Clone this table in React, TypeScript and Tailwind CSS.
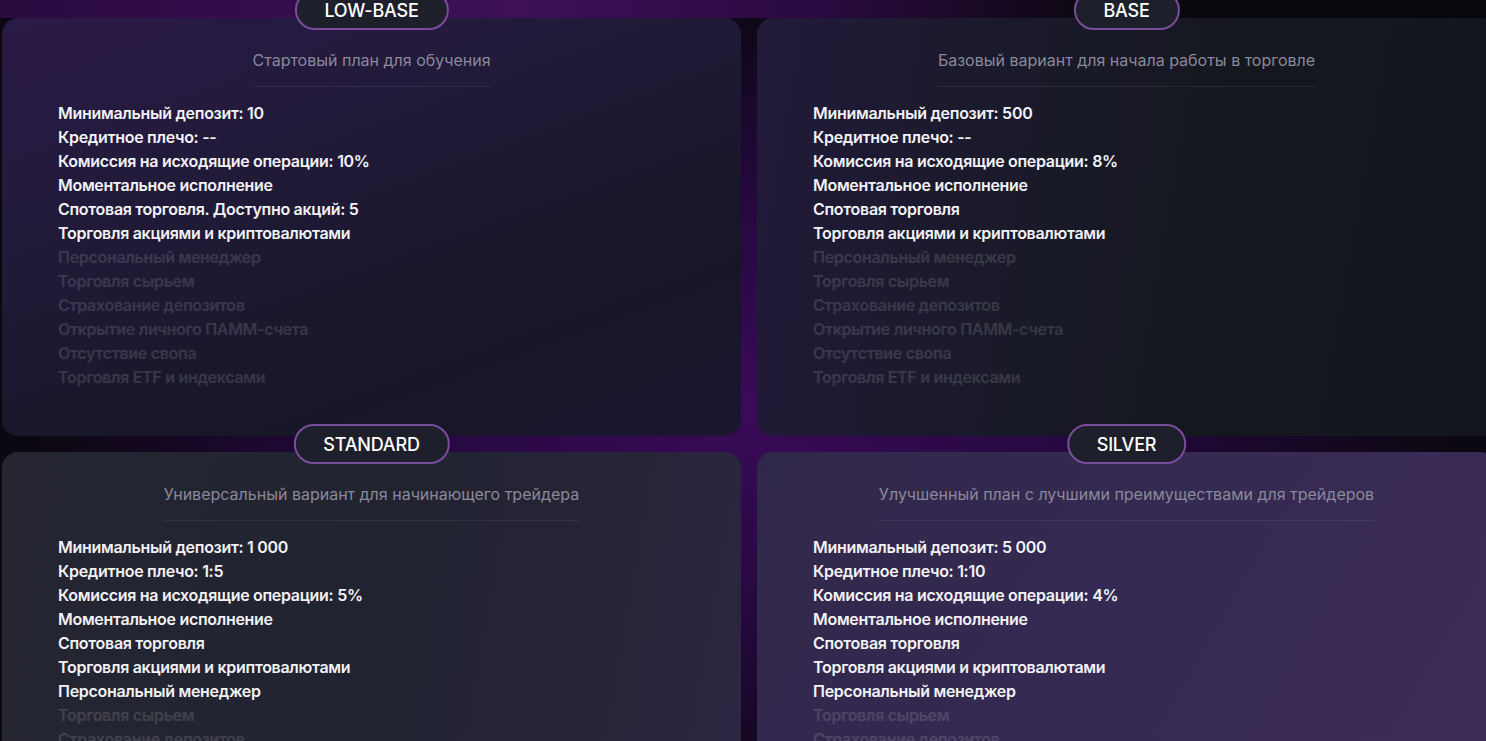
import React from 'react';

type Plan = {
  name: string;
  subtitle: string;
  features: string[];
  active: number;
  card: string;
};

const rest = [
  'Персональный менеджер',
  'Торговля сырьем',
  'Страхование депозитов',
  'Открытие личного ПАММ-счета',
  'Отсутствие свопа',
  'Торговля ETF и индексами',
];

const plans: Plan[] = [
  {
    name: 'LOW-BASE',
    subtitle: 'Стартовый план для обучения',
    features: [
      'Минимальный депозит: 10',
      'Кредитное плечо: --',
      'Комиссия на исходящие операции: 10%',
      'Моментальное исполнение',
      'Спотовая торговля. Доступно акций: 5',
      'Торговля акциями и криптовалютами',
      ...rest,
    ],
    active: 6,
    card: 'bg-[linear-gradient(160deg,#2a1a47_0%,#1f1a36_40%,#171626_75%,#1c1632_100%)]',
  },
  {
    name: 'BASE',
    subtitle: 'Базовый вариант для начала работы в торговле',
    features: [
      'Минимальный депозит: 500',
      'Кредитное плечо: --',
      'Комиссия на исходящие операции: 8%',
      'Моментальное исполнение',
      'Спотовая торговля',
      'Торговля акциями и криптовалютами',
      ...rest,
    ],
    active: 6,
    card: 'bg-[linear-gradient(100deg,#221a3a_0%,#1a1a2a_35%,#15171f_60%,#14161d_100%)]',
  },
  {
    name: 'STANDARD',
    subtitle: 'Универсальный вариант для начинающего трейдера',
    features: [
      'Минимальный депозит: 1 000',
      'Кредитное плечо: 1:5',
      'Комиссия на исходящие операции: 5%',
      'Моментальное исполнение',
      'Спотовая торговля',
      'Торговля акциями и криптовалютами',
      ...rest,
    ],
    active: 7,
    card: 'bg-[linear-gradient(100deg,#252632_0%,#212330_50%,#272438_80%,#2e2644_100%)]',
  },
  {
    name: 'SILVER',
    subtitle: 'Улучшенный план с лучшими преимуществами для трейдеров',
    features: [
      'Минимальный депозит: 5 000',
      'Кредитное плечо: 1:10',
      'Комиссия на исходящие операции: 4%',
      'Моментальное исполнение',
      'Спотовая торговля',
      'Торговля акциями и криптовалютами',
      ...rest,
    ],
    active: 7,
    card: 'bg-[linear-gradient(120deg,#30284a_0%,#352a52_45%,#3c2c58_100%)]',
  },
];

function PlanCard({ plan }: { plan: Plan }) {
  return (
    <div className={`relative rounded-[16px] pt-[30px] pb-[47px] ${plan.card}`}>
      <div className="absolute left-1/2 top-[-28px] -translate-x-1/2 h-[40px] px-[28px] flex items-center rounded-full border-2 border-[#7b4c9c] bg-[#1d1f2b] text-white text-[18px] font-medium tracking-[-0.2px]">
        {plan.name}
      </div>
      <div className="flex justify-center">
        <div className="pb-[14px] border-b border-white/[0.07] text-[16px] text-[#8a889a]">
          {plan.subtitle}
        </div>
      </div>
      <ul className="mt-[14px] pl-[56px] flex flex-col">
        {plan.features.map((f, i) => (
          <li
            key={f}
            className={
              i < plan.active
                ? 'h-[24px] leading-[24px] text-[16px] font-semibold text-[#f2f2f6] tracking-[-0.3px]'
                : 'h-[24px] leading-[24px] text-[16px] font-semibold text-white/[0.13] tracking-[-0.3px]'
            }
          >
            {f}
          </li>
        ))}
      </ul>
    </div>
  );
}

export default function App() {
  return (
    <div
      className="h-[741px] w-[1486px] overflow-hidden bg-[radial-gradient(ellipse_60%_70%_at_50%_55%,#3a0b5a_0%,#22083a_45%,#0c0811_80%)]"
      style={{ fontFamily: 'Inter, "Noto Sans", sans-serif' }}
    >
      <div className="h-[18px] bg-[linear-gradient(90deg,#2b0b40_0%,#3d1058_35%,#2a0a40_55%,#0a080e_75%,#08070b_100%)]" />
      <div className="grid grid-cols-[739px_739px] gap-4 pl-[2px]">
        {plans.map((p) => (
          <PlanCard key={p.name} plan={p} />
        ))}
      </div>
    </div>
  );
}
